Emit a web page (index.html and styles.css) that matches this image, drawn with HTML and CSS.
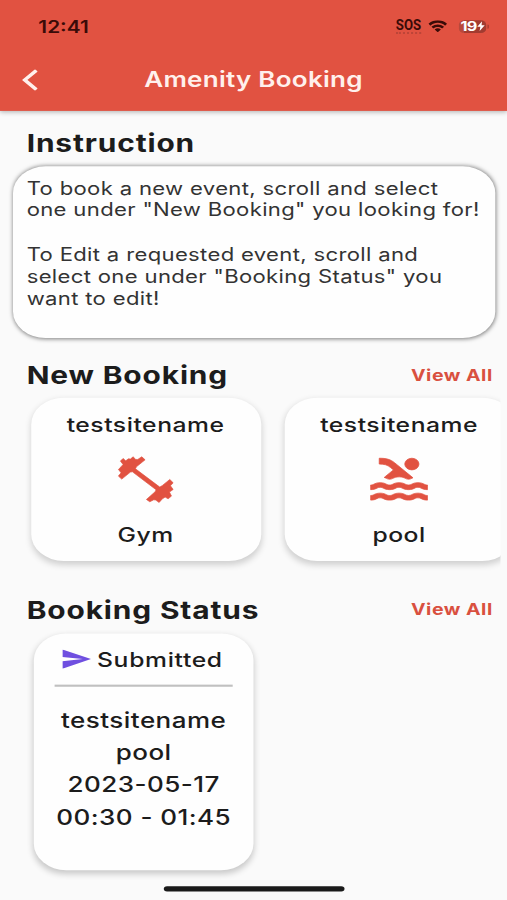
FILE: index.html
```html
<!DOCTYPE html>
<html lang="en">
<head>
    <meta charset="UTF-8">
    <meta name="viewport" content="width=device-width, initial-scale=1.0">
    <title>Amenity Booking</title>
    <link rel="stylesheet" href="styles.css">
</head>
<body>
    <div class="screen">
        <header class="header">
            <div class="status-bar">
                <span class="time">12:41</span>
                <div class="status-icons">
                    <span class="sos">SOS</span>
                    <svg class="wifi" viewBox="0 0 17 11" preserveAspectRatio="none">
                        <path d="M8.5 2.4c2.3 0 4.4.9 6 2.4.1.1.3.1.4 0l1.2-1.2c.1-.1.1-.3 0-.5-4.2-4-10.9-4-15.2 0-.1.1-.1.3 0 .5l1.2 1.2c.1.1.3.1.4 0 1.6-1.5 3.7-2.4 6-2.4z"/>
                        <path d="M8.5 6.3c1.3 0 2.5.5 3.4 1.3.1.1.3.1.5 0l1.2-1.2c.1-.1.1-.3 0-.5-2.9-2.7-7.3-2.7-10.2 0-.1.1-.1.3 0 .5l1.2 1.2c.1.1.3.1.5 0 .9-.8 2.1-1.3 3.4-1.3z"/>
                        <path d="M10.9 8.9c.1-.1.1-.3 0-.5-1.4-1.2-3.4-1.2-4.8 0-.1.1-.1.3 0 .5l2.1 2.1c.1.1.3.1.5 0z"/>
                    </svg>
                    <div class="battery">
                        <span>19</span>
                        <svg class="bolt" viewBox="0 0 7 11"><path d="M4.5 0 0 6.2h2.9L2.2 11 7 4.6H4z"/></svg>
                    </div>
                </div>
            </div>
            <div class="app-bar">
                <svg class="back" viewBox="0 0 12 20"><path d="M11 1 2 10l9 9"/></svg>
                <h1>Amenity Booking</h1>
            </div>
        </header>

        <main>
            <div class="section-head">
                <h2>Instruction</h2>
            </div>
            <div class="instruction">
                <p>To book a new event, scroll and select<br>one under "New Booking" you looking for!</p>
                <p>To Edit a requested event, scroll and<br>select one under "Booking Status" you<br>want to edit!</p>
            </div>

            <div class="section-head">
                <h2>New Booking</h2>
                <a class="view-all">View All</a>
            </div>
            <div class="amenities">
                <div class="card">
                    <span>testsitename</span>
                    <svg class="icon gym" viewBox="42 26.5 187 153.6" preserveAspectRatio="none">
                        <path d="M60 47 68 39 76 46 84 40 90 41 98 34 106 42 112 42 124 34 134 43 108 64 105 70 178 125 186 120 208 102 218 112 210 121 218 132 207 140 213 152 203 160 194 155 186 160 176 171 166 164 160 163 148 169 138 162 164 139 167 133 96 79 90 80 64 101 54 92 62 82 54 72 62 64 68 57z"/>
                    </svg>
                    <span>Gym</span>
                </div>
                <div class="card">
                    <span>testsitename</span>
                    <svg class="icon pool" viewBox="1 1.3 22 22">
                        <path d="m10 8-3.25 3.25c.31.12.56.27.77.39.37.23.59.36 1.15.36s.78-.13 1.15-.36c.46-.27 1.08-.64 2.19-.64s1.73.37 2.18.64c.37.22.6.36 1.15.36.55 0 .78-.13 1.15-.36.12-.07.26-.15.41-.23L10.480 5C8.930 3.450 7.500 2.990 5 3v2.500c1.820-.01 2.890.39 4 1.500l1 1z"/>
                        <circle cx="16.5" cy="5.5" r="2.5"/>
                        <path id="wave" d="M22 16.5h-.02c-1.110 0-1.730-.37-2.180-.64-.37-.22-.6-.36-1.150-.36-.56 0-.78.13-1.150.36-.46.27-1.070.64-2.180.64s-1.730-.37-2.180-.64c-.37-.22-.6-.36-1.150-.36-.56 0-.78.13-1.150.36-.46.27-1.080.64-2.190.64-1.110 0-1.730-.37-2.180-.64-.37-.23-.6-.36-1.150-.36s-.78.13-1.150.36c-.46.27-1.080.64-2.190.64v-2c.56 0 .78-.13 1.150-.36.46-.27 1.080-.64 2.190-.64s1.730.37 2.180.64c.37.23.59.36 1.150.36.56 0 .78-.13 1.150-.36.46-.27 1.080-.64 2.190-.64 1.110 0 1.730.37 2.180.64.37.22.6.36 1.150.36s.78-.13 1.150-.36c.45-.27 1.070-.64 2.180-.64s1.730.37 2.180.64c.37.23.59.36 1.150.36v2z"/>
                        <use href="#wave" y="4.5"/>
                    </svg>
                    <span>pool</span>
                </div>
            </div>

            <div class="section-head">
                <h2>Booking Status</h2>
                <a class="view-all">View All</a>
            </div>
            <div class="status-card">
                <div class="status-title">
                    <svg class="send" viewBox="2 3 21 18" preserveAspectRatio="none"><path d="M2.010 21 23 12 2.010 3 2 10l15 2-15 2z"/></svg>
                    <span>Submitted</span>
                </div>
                <div class="details">
                    <span>testsitename</span>
                    <span>pool</span>
                    <span>2023-05-17</span>
                    <span>00:30 - 01:45</span>
                </div>
            </div>
        </main>

        <div class="home-indicator"></div>
    </div>
</body>
</html>
```
FILE: styles.css
```css
:root {
    --primary: #e15241;
    --page-bg: #fafafa;
    --card-bg: #fefefe;
    --text: #1c1c1c;
}

* {
    box-sizing: border-box;
}

body {
    margin: 0;
    height: 900px;
    overflow: hidden;
    background: var(--page-bg);
    font-family: Inter, "Liberation Sans", sans-serif;
    color: var(--text);
}

/* 390x844 phone layout, stretched to fill the window */
.screen {
    position: relative;
    width: 390px;
    height: 844px;
    transform: scale(1.3, 1.0664);
    transform-origin: 0 0;
    overflow: hidden;
}

h1, h2, p {
    margin: 0;
}

/* Header */
.header {
    height: 104px;
    background: var(--primary);
    box-shadow: 0 1px 4px rgba(0, 0, 0, 0.3);
}

.status-bar {
    height: 48px;
    padding: 1px 16px 0 29.5px;
    display: flex;
    align-items: center;
    justify-content: space-between;
    color: #3a0b08;
}

.time {
    font-size: 16px;
    font-weight: 600;
}

.status-icons {
    display: flex;
    align-items: center;
}

.sos {
    margin-right: 5px;
    font-family: Roboto, "Liberation Sans", sans-serif;
    font-size: 13px;
    line-height: 13px;
    font-weight: 700;
    border-bottom: 2px dotted #bd4538;
    transform: scaleX(0.78);
    transform-origin: 100% 50%;
}

.wifi {
    width: 15.5px;
    height: 11px;
    margin-right: 8.5px;
    fill: #3a0b08;
}

.battery {
    position: relative;
    display: flex;
    align-items: center;
    justify-content: center;
    width: 21px;
    height: 12px;
    border-radius: 4px;
    background: linear-gradient(90deg, #b8483b 20%, #a23b30 20%);
    color: #fff;
    font-size: 12.5px;
    font-weight: 700;
    letter-spacing: -0.5px;
}

.battery::after {
    content: '';
    position: absolute;
    right: -2px;
    top: 4px;
    width: 1.5px;
    height: 4px;
    border-radius: 0 2px 2px 0;
    background: #a23b30;
}

.bolt {
    width: 6px;
    height: 9px;
    fill: #fff;
}

.app-bar {
    height: 56px;
    padding: 0 18px 2px 17px;
    display: flex;
    align-items: center;
    color: #fff0ec;
}

.back {
    width: 12px;
    height: 20px;
    fill: none;
    stroke: #fff0ec;
    stroke-width: 3;
}

h1 {
    flex: 1;
    margin-right: 11px;
    text-align: center;
    font-size: 20px;
    font-weight: 600;
    letter-spacing: 0.2px;
}

/* Sections */
main {
    padding-top: 15px;
}

.section-head {
    height: 32px;
    padding: 0 11px 0 20.5px;
    display: flex;
    align-items: center;
    justify-content: space-between;
}

h2 {
    font-size: 23px;
    font-weight: 700;
    letter-spacing: 0.65px;
}

.view-all {
    padding-bottom: 1px;
    font-size: 15px;
    font-weight: 700;
    letter-spacing: 0.4px;
    color: #d9503f;
}

.instruction {
    height: 161px;
    margin: 5px 9px 19px 10px;
    padding: 10.5px;
    border-radius: 25px;
    background: var(--card-bg);
    box-shadow: 0 0 4px rgba(0, 0, 0, 0.5);
    font-size: 17px;
    line-height: 20.7px;
    letter-spacing: 0.25px;
    color: #333;
    white-space: nowrap;
}

.instruction p + p {
    margin-top: 20.7px;
}

.amenities {
    display: flex;
    gap: 18px;
    margin-right: 5px;
    padding: 5px 0 30px 23.5px;
    overflow: hidden;
}

.card {
    flex: none;
    width: 177px;
    height: 153px;
    padding: 13.5px 0 12.5px;
    display: flex;
    flex-direction: column;
    align-items: center;
    justify-content: space-between;
    border-radius: 25px;
    background: var(--card-bg);
    box-shadow: 0 3px 5px rgba(0, 0, 0, 0.17);
    font-size: 19px;
    line-height: 24px;
    font-weight: 500;
    letter-spacing: 0.4px;
}

.icon {
    width: 48px;
    height: 48px;
    margin-top: -1px;
    fill: var(--primary);
    stroke: var(--primary);
}

.gym {
    stroke-width: 2;
}

.pool {
    stroke-width: 0.3;
}

/* Booking status */
.status-card {
    width: 169px;
    height: 222px;
    margin: 6px 0 0 26px;
    padding: 9px 16px;
    border-radius: 25px;
    background: var(--card-bg);
    box-shadow: 0 3px 5px rgba(0, 0, 0, 0.2);
    font-size: 20px;
    font-weight: 500;
    letter-spacing: 0.35px;
}

.status-title {
    height: 41px;
    padding: 0 2px 9px 0;
    display: flex;
    align-items: center;
    justify-content: center;
    gap: 5px;
    border-bottom: 2px solid #c0c0c0;
    font-size: 19px;
    letter-spacing: 0.5px;
}

.send {
    width: 22px;
    height: 18px;
    fill: #6f4fe0;
}

.details {
    padding-top: 16.5px;
    display: flex;
    flex-direction: column;
    align-items: center;
    line-height: 30.4px;
    white-space: nowrap;
}

.home-indicator {
    position: absolute;
    left: 126px;
    bottom: 8px;
    width: 139px;
    height: 5px;
    border-radius: 3px;
    background: #1a1a1a;
}
```
